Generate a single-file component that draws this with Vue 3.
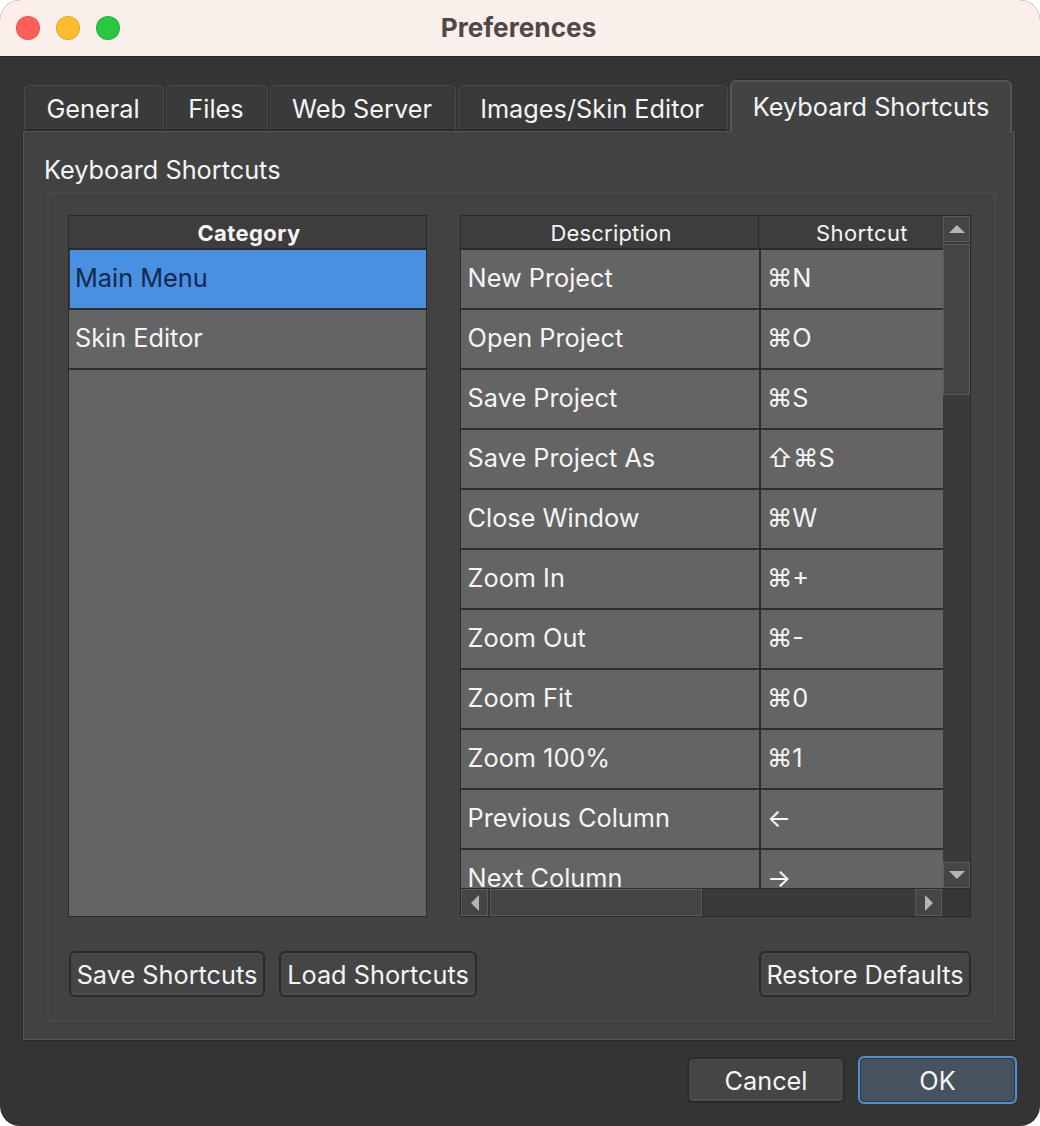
<script setup>
const tabs = [
  { label: 'General', width: 140 },
  { label: 'Files', width: 102 },
  { label: 'Web Server', width: 186 },
  { label: 'Images/Skin Editor', width: 270 },
  { label: 'Keyboard Shortcuts', width: 282, active: true },
]

const categories = [
  { name: 'Main Menu', selected: true },
  { name: 'Skin Editor' },
]

const shortcuts = [
  ['New Project', '⌘N'],
  ['Open Project', '⌘O'],
  ['Save Project', '⌘S'],
  ['Save Project As', '⇧⌘S'],
  ['Close Window', '⌘W'],
  ['Zoom In', '⌘+'],
  ['Zoom Out', '⌘-'],
  ['Zoom Fit', '⌘0'],
  ['Zoom 100%', '⌘1'],
  ['Previous Column', '←'],
  ['Next Column', '→'],
]
</script>

<template>
  <div class="window">
    <header class="titlebar">
      <div class="lights">
        <span class="light red"></span>
        <span class="light yellow"></span>
        <span class="light green"></span>
      </div>
      <div class="title">Preferences</div>
    </header>

    <main class="content">
      <div class="tabs">
        <div
          v-for="tab in tabs"
          :key="tab.label"
          class="tab"
          :class="{ active: tab.active }"
          :style="{ width: tab.width + 'px' }"
        >
          {{ tab.label }}
        </div>
      </div>

      <section class="pane">
        <div class="group-title">Keyboard Shortcuts</div>
        <div class="group">
          <div class="tables">
            <div class="table left-table">
              <div class="head strong">Category</div>
              <div
                v-for="cat in categories"
                :key="cat.name"
                class="row cat"
                :class="{ selected: cat.selected }"
              >
                {{ cat.name }}
              </div>
            </div>

            <div class="table right-table">
              <div class="right-top">
                <div class="right-main">
                  <div class="head-row">
                    <div class="head col-a">Description</div>
                    <div class="head col-b">Shortcut</div>
                  </div>
                  <div class="rows">
                    <div v-for="item in shortcuts" :key="item[0]" class="row sc">
                      <div class="cell col-a">{{ item[0] }}</div>
                      <div class="cell col-b">{{ item[1] }}</div>
                    </div>
                  </div>
                </div>
                <div class="vbar">
                  <div class="sbtn vbtn">
                    <svg width="20" height="12" viewBox="0 0 20 12"><polygon points="2,10 10,2 18,10" fill="#b5b5b5" /></svg>
                  </div>
                  <div class="vthumb"></div>
                  <div class="spacer"></div>
                  <div class="sbtn vbtn">
                    <svg width="20" height="12" viewBox="0 0 20 12"><polygon points="2,2 18,2 10,10" fill="#b5b5b5" /></svg>
                  </div>
                </div>
              </div>
              <div class="hbar">
                <div class="sbtn hbtn">
                  <svg width="12" height="20" viewBox="0 0 12 20"><polygon points="10,2 10,18 2,10" fill="#b5b5b5" /></svg>
                </div>
                <div class="hthumb"></div>
                <div class="spacer"></div>
                <div class="sbtn hbtn">
                  <svg width="12" height="20" viewBox="0 0 12 20"><polygon points="2,2 10,10 2,18" fill="#b5b5b5" /></svg>
                </div>
                <div class="corner"></div>
              </div>
            </div>
          </div>

          <div class="group-actions">
            <button class="btn save">Save Shortcuts</button>
            <button class="btn load">Load Shortcuts</button>
            <button class="btn restore">Restore Defaults</button>
          </div>
        </div>
      </section>

      <footer class="footer">
        <button class="btn cancel">Cancel</button>
        <button class="btn ok">OK</button>
      </footer>
    </main>
  </div>
</template>

<style>
html,
body {
  margin: 0;
  background: #fff;
}
</style>

<style scoped>
.window {
  width: 1040px;
  height: 1126px;
  display: flex;
  flex-direction: column;
  border-radius: 20px;
  overflow: hidden;
  font-family: Inter, "DejaVu Sans", sans-serif;
  font-size: 25.3px;
  color: #f4f4f4;
  background: #343434;
}

.titlebar {
  position: relative;
  height: 57px;
  flex: none;
  display: flex;
  align-items: center;
  justify-content: center;
  box-sizing: border-box;
  background: #fbefec;
  border-bottom: 1px solid #262626;
}

.title {
  font-size: 26.2px;
  font-weight: 700;
  color: #4d4947;
  margin-left: -3px;
  padding-bottom: 2px;
}

.lights {
  position: absolute;
  left: 16px;
  top: 16px;
  display: flex;
  gap: 16px;
}

.light {
  width: 24px;
  height: 24px;
  box-sizing: border-box;
  border-radius: 50%;
  border: 1px solid rgba(0, 0, 0, 0.1);
}

.red {
  background: #ff5f57;
}

.yellow {
  background: #febc2e;
}

.green {
  background: #28c840;
}

.content {
  flex: 1;
  display: flex;
  flex-direction: column;
  padding: 23px 22px 0 22px;
  min-height: 0;
}

.tabs {
  display: flex;
  align-items: flex-end;
  gap: 2px;
  height: 51px;
  padding-left: 2px;
  position: relative;
  z-index: 1;
}

.tab {
  height: 46px;
  box-sizing: border-box;
  display: flex;
  align-items: center;
  justify-content: center;
  background: #3a3a3a;
  border: 1px solid #4a4a4a;
  border-bottom: 2px solid #2b2b2b;
  border-radius: 6px 6px 0 0;
  padding: 1px 2px 0 0;
}

.tab.active {
  height: 52px;
  margin-bottom: -1px;
  background: #434343;
  border: 2px solid #565656;
  border-bottom: 0;
  padding: 0 0 2px;
  box-shadow: 0 -1px 0 #2b2b2b;
}

.pane {
  width: 994px;
  height: 911px;
  box-sizing: border-box;
  margin-top: -1px;
  background: #424242;
  border: 2px solid #565656;
  outline: 1px solid #2b2b2b;
  outline-offset: -1px;
  padding: 0 18px 0 23px;
  display: flex;
  flex-direction: column;
}

.group-title {
  height: 60px;
  flex: none;
  display: flex;
  align-items: center;
  line-height: 1;
  margin-left: -3px;
  padding-top: 16px;
  box-sizing: border-box;
}

.group {
  flex: 1;
  margin-bottom: 17px;
  box-sizing: border-box;
  border: 2px solid #484848;
  padding: 21px 23px 0 19px;
  display: flex;
  flex-direction: column;
}

.tables {
  display: flex;
  justify-content: space-between;
  height: 702px;
  flex: none;
}

.table {
  box-sizing: border-box;
  border: 1px solid #2a2a2a;
  background: #646464;
}

.left-table {
  width: 359px;
}

.right-table {
  width: 511px;
  display: flex;
  flex-direction: column;
  background: #3a3a3a;
}

.head {
  height: 34px;
  box-sizing: border-box;
  display: flex;
  align-items: center;
  justify-content: center;
  background: #3d3d3d;
  border-bottom: 2px solid #2a2a2a;
  font-size: 22px;
  letter-spacing: 0.2px;
  padding-top: 1px;
}

.strong {
  font-weight: 700;
  letter-spacing: 0.4px;
  padding-left: 3px;
}

.row {
  height: 60px;
  box-sizing: border-box;
  background: #646464;
  border-bottom: 2px solid #2e2e2e;
}

.cat {
  display: flex;
  align-items: center;
  padding: 0 0 3px 6px;
}

.selected {
  background: #4a90e2;
  color: #10294c;
  border-left: 1px solid #3d3d3d;
  padding-left: 5px;
}

.right-top {
  height: 672px;
  flex: none;
  display: flex;
}

.right-main {
  width: 482px;
  flex: none;
}

.head-row {
  display: flex;
}

.head-row .col-a {
  width: 298px;
  border-right: 1px solid #2a2a2a;
  padding-left: 3px;
}

.head-row .col-b {
  flex: 1;
  padding-left: 22px;
  letter-spacing: 0.4px;
}

.rows {
  height: 638px;
  overflow: hidden;
}

.sc {
  display: flex;
}

.cell {
  display: flex;
  align-items: center;
  box-sizing: border-box;
  padding: 0 0 3px 6.6px;
}

.cell.col-a {
  width: 300px;
  border-right: 2px solid #2e2e2e;
}

.cell.col-b {
  flex: 1;
  padding-left: 6px;
}

.vbar {
  flex: 1;
  display: flex;
  flex-direction: column;
  background: #3a3a3a;
}

.hbar {
  flex: 1;
  display: flex;
  background: #3a3a3a;
  border-top: 1px solid #2a2a2a;
}

.sbtn {
  box-sizing: border-box;
  display: flex;
  align-items: center;
  justify-content: center;
  background: #454545;
  border: 1px solid #5a5a5a;
  flex: none;
}

.vbtn {
  height: 26px;
}

.hbtn {
  width: 27px;
}

.vthumb {
  height: 151px;
  margin-top: 2px;
  box-sizing: border-box;
  background: #444;
  border: 1px solid #5a5a5a;
}

.hthumb {
  width: 212px;
  margin-left: 2px;
  box-sizing: border-box;
  background: #444;
  border: 1px solid #5a5a5a;
  box-shadow: 0 0 0 1px #2e2e2e;
}

.spacer {
  flex: 1;
}

.corner {
  width: 28px;
  background: #363636;
}

.group-actions {
  display: flex;
  margin-top: 34px;
  gap: 14px;
}

.btn {
  height: 46px;
  box-sizing: border-box;
  font: inherit;
  color: inherit;
  background: #454545;
  border: 2px solid #2a2a2a;
  border-radius: 6px;
  box-shadow: inset 0 -2px 0 #505050, inset 0 1px 0 #4c4c4c;
  padding: 0;
}

.save {
  width: 196px;
  margin-left: 1px;
}

.load {
  width: 198px;
}

.restore {
  width: 212px;
  margin-left: auto;
}

.footer {
  display: flex;
  justify-content: flex-end;
  align-items: center;
  gap: 13px;
  margin-top: 15px;
  padding-right: 1px;
}

.cancel {
  width: 158px;
}

.ok {
  width: 159px;
  height: 48px;
  background: #47525f;
  border-color: #4f8fd6;
  box-shadow: inset 0 0 0 1px #2d3a48;
}
</style>
